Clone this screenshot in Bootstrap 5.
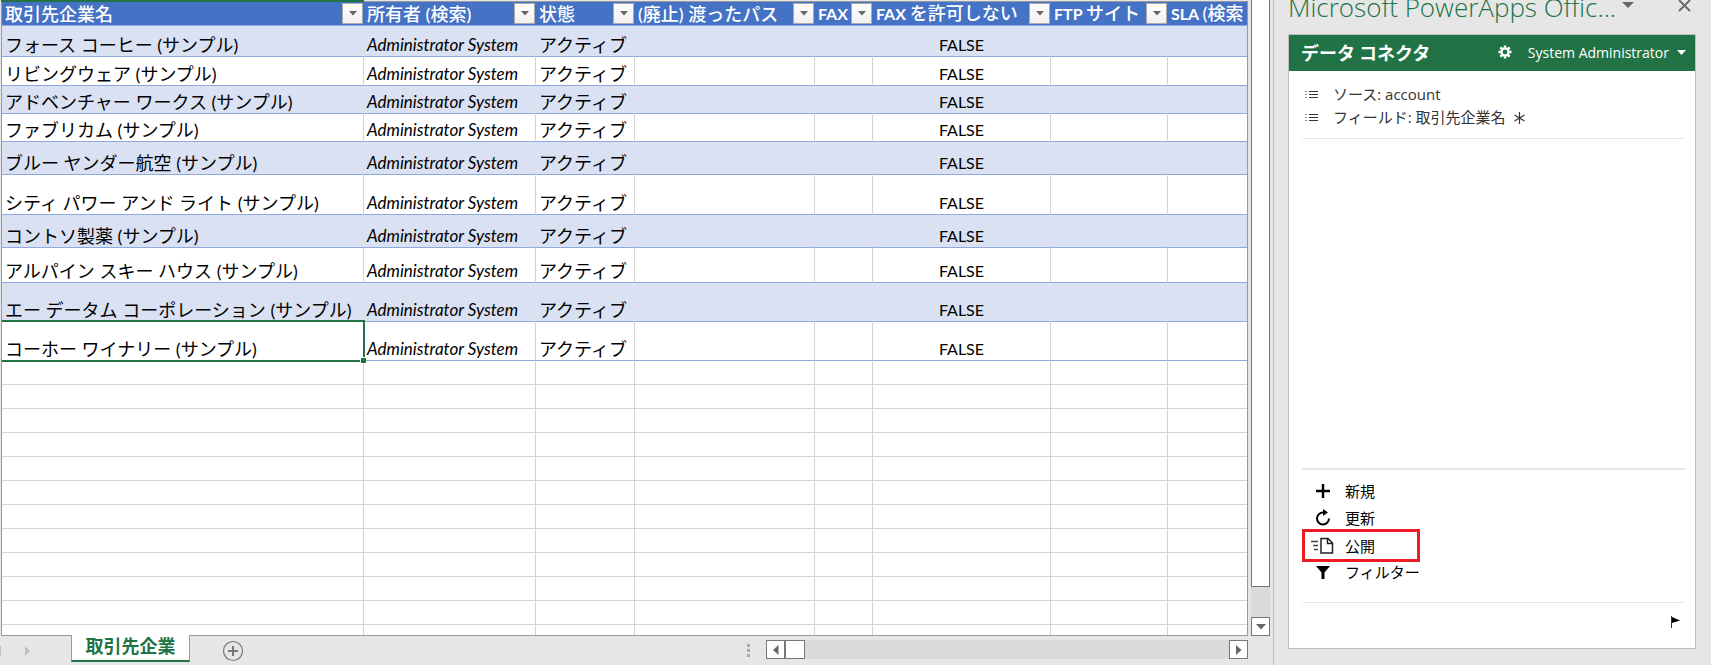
<!DOCTYPE html>
<html lang="ja">
<head>
<meta charset="utf-8">
<meta name="viewport" content="width=device-width, initial-scale=1">
<title>取引先企業</title>
<link href="https://cdn.jsdelivr.net/npm/bootstrap@5.3.0/dist/css/bootstrap.min.css" rel="stylesheet">
<script src="https://cdn.jsdelivr.net/npm/bootstrap@5.3.0/dist/js/bootstrap.bundle.min.js"></script>
<style>
  body { background: #e6e6e6; color: #000; font-family: "Open Sans", "Noto Sans CJK JP", sans-serif; }
  button { background: none; border: 0; padding: 0; color: inherit; }

  /* Worksheet */
  .sheet-area { min-width: 0; }
  .sheet-view { min-height: 0; }
  .sheet-grid { border: 1px solid #999; margin: 1px 0 0 1px; background: #fff; }
  .sheet-table { width: 100%; table-layout: fixed; border-collapse: separate; border-spacing: 0; font-family: Lato, "Noto Sans CJK JP", sans-serif; font-size: 16px; line-height: 20px; }
  .sheet-table th, .sheet-table td { padding: 0 3px; border-right: 1px solid #d4d4d4; border-bottom: 1px solid #d4d4d4; vertical-align: bottom; white-space: nowrap; overflow: hidden; height: 24px; }
  .sheet-table th:last-child, .sheet-table td:last-child { border-right: 0; }
  .sheet-table th { background: #4472c4; color: #fff; border-right: 0; border-bottom-color: #8ea9db; padding: 0 1px 0 3px; vertical-align: middle; }
  .sheet-table .record td { border-bottom-color: #8ea9db; padding-bottom: 1px; }
  .sheet-table .record:nth-child(odd) td { background: #d9e1f2; border-right-color: #d9e1f2; }
  .sheet-table .fst-italic { font-size: 17px; }
  .jp { font-size: 18px; }
  th .jp { font-weight: 500; }
  .h28 td { height: 28px !important; } .h29 td { height: 29px !important; } .h31 td { height: 31px !important; }
  .h33 td { height: 33px !important; } .h35 td { height: 35px !important; } .h39 td { height: 39px !important; } .h40 td { height: 40px !important; }
  .w-name { width: 362px; } .w-owner { width: 172px; } .w-state { width: 99px; } .w-path { width: 180px; }
  .w-fax { width: 58px; } .w-nofax { width: 178px; } .w-ftp { width: 117px; }
  .filter-btn { width: 21px; height: 21px; border: 1px solid #aaa; background: linear-gradient(#fff, #f0f0f0); flex: none; display: flex; align-items: center; justify-content: center; }
  .column-mark { height: 2px; width: 363px; left: 1px; top: 0; background: #217346; z-index: 2; }
  .picked { overflow: visible !important; position: relative; }
  .pick-frame { position: absolute; inset: -2px -2px -2px -2px; border: 2px solid #217346; pointer-events: none; }
  .pick-frame::after { content: ""; position: absolute; right: -3px; bottom: -3px; width: 6px; height: 6px; background: #217346; border: solid #fff; border-width: 1px 0 0 1px; }

  /* Scroll bars */
  .vbar { width: 19px; margin: 0 3px; }
  .vthumb { flex: 588 0 0; background: #fff; border: 1px solid #777; border-top: 0; }
  .track { background: #dadada; }
  .vgap { flex: 30 0 0; }
  .bar-btn { width: 19px; height: 19px; background: #fff; border: 1px solid #777; display: flex; align-items: center; justify-content: center; flex: none; }
  .hbar { width: 482px; height: 19px; margin-right: 25px; }
  .hthumb { width: 20px; background: #fff; border: 1px solid #777; }

  /* Sheet tabs */
  .tabs-strip { height: 29px; }
  .tab-space { width: 71px; height: 29px; padding-right: 41px; }
  .sheet-tab { width: 119px; height: 27px; margin-top: -1px; padding-bottom: 5px; background: #fff; border: 1px solid #999; border-top: 0; border-bottom: 2px solid #217346; color: #217346; font: bold 18px/20px "Noto Sans CJK JP", sans-serif; position: relative; }
  .grip span { display: block; width: 3px; height: 3px; margin-bottom: 2px; background: #aaa; }

  /* Task pane */
  .pane { width: 438px; border-left: 1px solid #bfbfbf; padding: 0 15px 16px 14px; }
  .pane-title { height: 34px; color: #217346; }
  .pane-title h1 { font: 300 26px/30px "Open Sans", sans-serif; margin: -8px 0 0; white-space: nowrap; }
  .pane-menu { margin-right: 44px; }
  .connector { border: 1px solid #bfbfbf; background: #fff; }
  .connector-head { height: 36px; background: #217346; color: #fff; padding: 0 9px 2px 12px; }
  .connector-head h2 { font: bold 18px/24px "Noto Sans CJK JP", sans-serif; margin: 0; }
  .user-btn { font-size: 14px; }
  .meta { font-size: 15px; line-height: 23px; color: #333; padding: 12px 16px 1px; }
  .meta svg:first-child { margin-right: 15px; }
  .rule { border-bottom: 1px solid #e8e8e8; margin: 0 10px 0 13px; }
  .rule-thick { border-bottom-width: 2px; }
  .actions { padding: 7px 0 0 13px; margin-bottom: 17px; }
  .act { height: 27px; width: 118px; display: flex; align-items: center; font-size: 15px; line-height: 20px; white-space: nowrap; padding-left: 9px; }
  .act svg { flex: none; margin-right: 10px; }
  .act-marked { border: 3px solid #ed1c24; height: 33px; margin: -2px 0 -4px; padding-left: 6px; }
  .connector-foot { height: 45px; padding: 0 15px 7px 0; }
</style>
</head>
<body class="vh-100 overflow-hidden">
<div class="d-flex h-100">

  <main class="sheet-area flex-grow-1 d-flex flex-column position-relative">
    <div class="column-mark position-absolute"></div>
    <div class="sheet-view flex-grow-1 d-flex">
      <div class="sheet-grid flex-grow-1 overflow-hidden">
        <table class="sheet-table">
          <colgroup><col class="w-name"><col class="w-owner"><col class="w-state"><col class="w-path"><col class="w-fax"><col class="w-nofax"><col class="w-ftp"><col></colgroup>
          <thead>
            <tr>
              <th><div class="d-flex align-items-center justify-content-between"><span class="jp">取引先企業名</span><button class="filter-btn" aria-label="フィルター"><svg width="8" height="5"><path d="M0 0h8L4 4.500z" fill="#666"/></svg></button></div></th>
              <th><div class="d-flex align-items-center justify-content-between"><span class="jp">所有者 (検索)</span><button class="filter-btn" aria-label="フィルター"><svg width="8" height="5"><path d="M0 0h8L4 4.500z" fill="#666"/></svg></button></div></th>
              <th><div class="d-flex align-items-center justify-content-between"><span class="jp">状態</span><button class="filter-btn" aria-label="フィルター"><svg width="8" height="5"><path d="M0 0h8L4 4.500z" fill="#666"/></svg></button></div></th>
              <th><div class="d-flex align-items-center justify-content-between"><span class="jp">(廃止) 渡ったパス</span><button class="filter-btn" aria-label="フィルター"><svg width="8" height="5"><path d="M0 0h8L4 4.500z" fill="#666"/></svg></button></div></th>
              <th><div class="d-flex align-items-center justify-content-between"><span>FAX</span><button class="filter-btn" aria-label="フィルター"><svg width="8" height="5"><path d="M0 0h8L4 4.500z" fill="#666"/></svg></button></div></th>
              <th><div class="d-flex align-items-center justify-content-between"><span>FAX <span class="jp">を許可しない</span></span><button class="filter-btn" aria-label="フィルター"><svg width="8" height="5"><path d="M0 0h8L4 4.500z" fill="#666"/></svg></button></div></th>
              <th><div class="d-flex align-items-center justify-content-between"><span>FTP <span class="jp">サイト</span></span><button class="filter-btn" aria-label="フィルター"><svg width="8" height="5"><path d="M0 0h8L4 4.500z" fill="#666"/></svg></button></div></th>
              <th><span>SLA <span class="jp">(検索</span></span></th>
            </tr>
          </thead>
          <tbody>
            <tr class="record h31"><td class="jp">フォース コーヒー (サンプル)</td><td class="fst-italic">Administrator System</td><td class="jp">アクティブ</td><td></td><td></td><td class="text-center">FALSE</td><td></td><td></td></tr>
            <tr class="record h29"><td class="jp">リビングウェア (サンプル)</td><td class="fst-italic">Administrator System</td><td class="jp">アクティブ</td><td></td><td></td><td class="text-center">FALSE</td><td></td><td></td></tr>
            <tr class="record h28"><td class="jp">アドベンチャー ワークス (サンプル)</td><td class="fst-italic">Administrator System</td><td class="jp">アクティブ</td><td></td><td></td><td class="text-center">FALSE</td><td></td><td></td></tr>
            <tr class="record h28"><td class="jp">ファブリカム (サンプル)</td><td class="fst-italic">Administrator System</td><td class="jp">アクティブ</td><td></td><td></td><td class="text-center">FALSE</td><td></td><td></td></tr>
            <tr class="record h33"><td class="jp">ブルー ヤンダー航空 (サンプル)</td><td class="fst-italic">Administrator System</td><td class="jp">アクティブ</td><td></td><td></td><td class="text-center">FALSE</td><td></td><td></td></tr>
            <tr class="record h40"><td class="jp">シティ パワー アンド ライト (サンプル)</td><td class="fst-italic">Administrator System</td><td class="jp">アクティブ</td><td></td><td></td><td class="text-center">FALSE</td><td></td><td></td></tr>
            <tr class="record h33"><td class="jp">コントソ製薬 (サンプル)</td><td class="fst-italic">Administrator System</td><td class="jp">アクティブ</td><td></td><td></td><td class="text-center">FALSE</td><td></td><td></td></tr>
            <tr class="record h35"><td class="jp">アルパイン スキー ハウス (サンプル)</td><td class="fst-italic">Administrator System</td><td class="jp">アクティブ</td><td></td><td></td><td class="text-center">FALSE</td><td></td><td></td></tr>
            <tr class="record h39"><td class="jp">エー データム コーポレーション (サンプル)</td><td class="fst-italic">Administrator System</td><td class="jp">アクティブ</td><td></td><td></td><td class="text-center">FALSE</td><td></td><td></td></tr>
            <tr class="record h39"><td class="jp picked">コーホー ワイナリー (サンプル)<span class="pick-frame"></span></td><td class="fst-italic">Administrator System</td><td class="jp">アクティブ</td><td></td><td></td><td class="text-center">FALSE</td><td></td><td></td></tr>
            <tr><td></td><td></td><td></td><td></td><td></td><td></td><td></td><td></td></tr>
            <tr><td></td><td></td><td></td><td></td><td></td><td></td><td></td><td></td></tr>
            <tr><td></td><td></td><td></td><td></td><td></td><td></td><td></td><td></td></tr>
            <tr><td></td><td></td><td></td><td></td><td></td><td></td><td></td><td></td></tr>
            <tr><td></td><td></td><td></td><td></td><td></td><td></td><td></td><td></td></tr>
            <tr><td></td><td></td><td></td><td></td><td></td><td></td><td></td><td></td></tr>
            <tr><td></td><td></td><td></td><td></td><td></td><td></td><td></td><td></td></tr>
            <tr><td></td><td></td><td></td><td></td><td></td><td></td><td></td><td></td></tr>
            <tr><td></td><td></td><td></td><td></td><td></td><td></td><td></td><td></td></tr>
            <tr><td></td><td></td><td></td><td></td><td></td><td></td><td></td><td></td></tr>
            <tr><td></td><td></td><td></td><td></td><td></td><td></td><td></td><td></td></tr>
            <tr><td></td><td></td><td></td><td></td><td></td><td></td><td></td><td></td></tr>
          </tbody>
        </table>
      </div>
      <div class="vbar d-flex flex-column track">
        <div class="vthumb"></div>
        <div class="vgap"></div>
        <button class="bar-btn" aria-label="下へ"><svg width="10" height="6"><path d="M0 0h10L5 5.500z" fill="#666"/></svg></button>
      </div>
    </div>

    <div class="tabs-strip d-flex align-items-start">
      <div class="tab-space d-flex align-items-center justify-content-between">
        <svg width="2" height="10"><path d="M0 0h1v10H0z" fill="#c0c0c0"/></svg>
        <svg width="5" height="10"><path d="M0 0v10l5-5z" fill="#c0c0c0"/></svg>
      </div>
      <button class="sheet-tab">取引先企業</button>
      <button class="ms-4 mt-1 ps-2" aria-label="新しいシート"><svg class="d-block" width="22" height="22" fill="none" stroke="#777"><circle cx="11" cy="11" r="9.500" stroke-width="1.200"/><path d="M6 11h10M11 6v10" stroke-width="2"/></svg></button>
      <div class="grip ms-auto me-3 pt-2"><span></span><span></span><span></span></div>
      <div class="hbar track d-flex mt-1">
        <button class="bar-btn" aria-label="左へ"><svg width="6" height="10"><path d="M5.500 0v10L0 5z" fill="#666"/></svg></button>
        <div class="hthumb"></div>
        <button class="bar-btn ms-auto" aria-label="右へ"><svg width="6" height="10"><path d="M0 0v10l5.500-5z" fill="#666"/></svg></button>
      </div>
    </div>
  </main>

  <aside class="pane flex-shrink-0 d-flex flex-column">
    <div class="pane-title d-flex align-items-start">
      <h1>Microsoft PowerApps Offic...</h1>
      <button class="pane-menu ms-auto" aria-label="作業ウィンドウのオプション"><svg class="d-block" width="12" height="9"><path d="M0 2h12L6 8z" fill="#666"/></svg></button>
      <button class="me-1" aria-label="閉じる"><svg class="d-block" width="14" height="13"><path d="M1 0l11 11M12 0L1 11" stroke="#666" stroke-width="1.800" fill="none"/></svg></button>
    </div>
    <section class="connector flex-grow-1 d-flex flex-column">
      <header class="connector-head d-flex align-items-center">
        <h2>データ コネクタ</h2>
        <button class="ms-auto me-3" aria-label="設定"><svg class="d-block" width="14" height="14" viewBox="0 0 14 14" fill="none" stroke="#fff"><circle cx="7" cy="7" r="3.600" stroke-width="2.400"/><path d="M7 0.500v2M7 11.500v2M0.500 7h2M11.500 7h2M2.400 2.400l1.500 1.500M10.100 10.100l1.500 1.500M11.600 2.400l-1.500 1.500M3.900 10.100l-1.500 1.500" stroke-width="2.400"/></svg></button>
        <button class="user-btn d-flex align-items-center">System Administrator<svg class="ms-2" width="9" height="5"><path d="M0 0h9L4.500 5z" fill="#fff"/></svg></button>
      </header>
      <div class="meta">
        <div class="d-flex align-items-center"><svg width="13" height="9" fill="none" stroke="#333"><path d="M0 1.500h2M0 4.500h2M0 7.500h2" stroke="#888"/><path d="M4 1.500h9M4 4.500h9M4 7.500h9" stroke-width="1.200"/></svg>ソース: account</div>
        <div class="d-flex align-items-center"><svg width="13" height="9" fill="none" stroke="#333"><path d="M0 1.500h2M0 4.500h2M0 7.500h2" stroke="#888"/><path d="M4 1.500h9M4 4.500h9M4 7.500h9" stroke-width="1.200"/></svg>フィールド: 取引先企業名<svg class="ms-2" width="11" height="12" fill="none" stroke="#333" stroke-width="1.200"><path d="M5.500 0v12M.5 3l10 6M10.500 3l-10 6"/></svg></div>
      </div>
      <div class="rule pt-2"></div>
      <div class="rule rule-thick mt-auto"></div>
      <div class="actions">
        <button class="act"><svg width="24" height="18" viewBox="0 0 24 18"><path d="M5 9h14M12 2v14" stroke="#000" stroke-width="2.400"/></svg>新規</button>
        <button class="act"><svg width="24" height="18" viewBox="0 0 24 18"><path d="M12.500 3.500A6 6 0 1 0 18 9.500" fill="none" stroke="#000" stroke-width="2"/><path d="M12 0l5 3.500-5 3.500z"/></svg>更新</button>
        <button class="act act-marked"><svg width="24" height="18" viewBox="0 0 24 18" fill="none"><path d="M0 4.500h7M2 8.500h5M3 12.500h4" stroke="#444" stroke-width="1.600"/><path d="M10 1.500h7l4.500 4.500v10H10zM16.500 1.500v5h5" stroke="#222" stroke-width="1.500"/></svg>公開</button>
        <button class="act"><svg width="24" height="18" viewBox="0 0 24 18"><path d="M5 3h14l-5.500 6.500V16h-3V9.500z"/></svg>フィルター</button>
      </div>
      <div class="rule"></div>
      <div class="connector-foot d-flex justify-content-end align-items-center"><button aria-label="フラグ"><svg class="d-block" width="9" height="12"><path d="M.5 0v12" stroke="#333"/><path d="M1 1l8 3.500L1 7z"/></svg></button></div>
    </section>
  </aside>
</div>
</body>
</html>
